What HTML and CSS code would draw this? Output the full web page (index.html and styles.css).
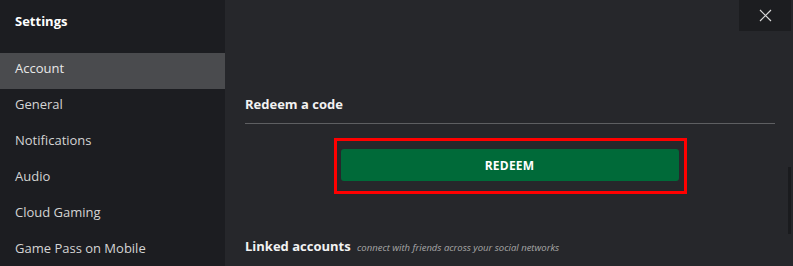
FILE: index.html
```html
<!DOCTYPE html>
<html>
<head>
<meta charset="utf-8">
<link rel="stylesheet" href="styles.css">
</head>
<body>
<div class="app">
  <aside class="sidebar">
    <div class="title">Settings</div>
    <nav class="nav">
      <div class="item active">Account</div>
      <div class="item">General</div>
      <div class="item">Notifications</div>
      <div class="item">Audio</div>
      <div class="item">Cloud Gaming</div>
      <div class="item">Game Pass on Mobile</div>
    </nav>
  </aside>
  <main class="main">
    <section class="section">
      <h2 class="heading">Redeem a code</h2>
      <div class="highlight">
        <button class="redeem">REDEEM</button>
      </div>
    </section>
    <section class="section linked">
      <h2 class="heading">Linked accounts <span class="sub">connect with friends across your social networks</span></h2>
    </section>
  </main>
  <button class="close" aria-label="Close">
    <svg width="13" height="13" viewBox="0 0 13 13"><path d="M1 1L12 12M12 1L1 12" stroke="#d8d8d8" stroke-width="1.2" fill="none"/></svg>
  </button>
  <div class="scrollbar"></div>
</div>
</body>
</html>
```
FILE: styles.css
```css
html, body {
  margin: 0;
  padding: 0;
  width: 793px;
  height: 266px;
  overflow: hidden;
  background: #26272b;
  font-family: "Open Sans", "Noto Sans", sans-serif;
  color: #e4e4e4;
}
.app {
  display: flex;
  height: 266px;
  position: relative;
}
.sidebar {
  width: 225px;
  flex: none;
  background: #1c1d21;
}
.title {
  padding: 12px 15px 0 15px;
  height: 53px;
  box-sizing: border-box;
  font-size: 13px;
  font-weight: 700;
  color: #ffffff;
  line-height: 18px;
}
.nav {
  display: flex;
  flex-direction: column;
}
.item {
  height: 36px;
  box-sizing: border-box;
  line-height: 31px;
  padding: 0 0 5px 15px;
  font-size: 13px;
  color: #d4d4d4;
}
.item.active {
  background: #4a4b4e;
  color: #e8e8e8;
}
.main {
  flex: 1;
  padding: 94px 18px 0 20px;
  display: flex;
  flex-direction: column;
}
.section {
  display: flex;
  flex-direction: column;
  align-items: center;
}
.heading {
  align-self: stretch;
  margin: 0;
  font-size: 13px;
  font-weight: 700;
  line-height: 20px;
  color: #f2f2f2;
  padding-bottom: 9px;
  border-bottom: 1px solid #5e5f62;
}
.highlight {
  margin-top: 14px;
  width: 353px;
  height: 56px;
  box-sizing: border-box;
  border: 3px solid #ff0000;
  padding: 8px 5px 0 4px;
}
.redeem {
  display: block;
  width: 100%;
  height: 32px;
  border: none;
  border-radius: 3px;
  background: #006a39;
  color: #ffffff;
  font-family: "Open Sans", "Noto Sans", sans-serif;
  font-size: 12px;
  font-weight: 700;
  letter-spacing: 0.2px;
  padding: 0;
}
.linked {
  margin-top: 42px;
}
.sub {
  font-size: 9.5px;
  font-weight: 400;
  font-style: italic;
  color: #a8a8a8;
  margin-left: 3px;
}
.close {
  position: absolute;
  top: 0;
  right: 2px;
  width: 52px;
  height: 31px;
  background: #1c1d20;
  border: none;
  padding: 0;
  display: flex;
  align-items: center;
  justify-content: center;
}
.scrollbar {
  position: absolute;
  right: 2px;
  top: 167px;
  width: 3px;
  height: 67px;
  background: #1a1b1e;
}
```
